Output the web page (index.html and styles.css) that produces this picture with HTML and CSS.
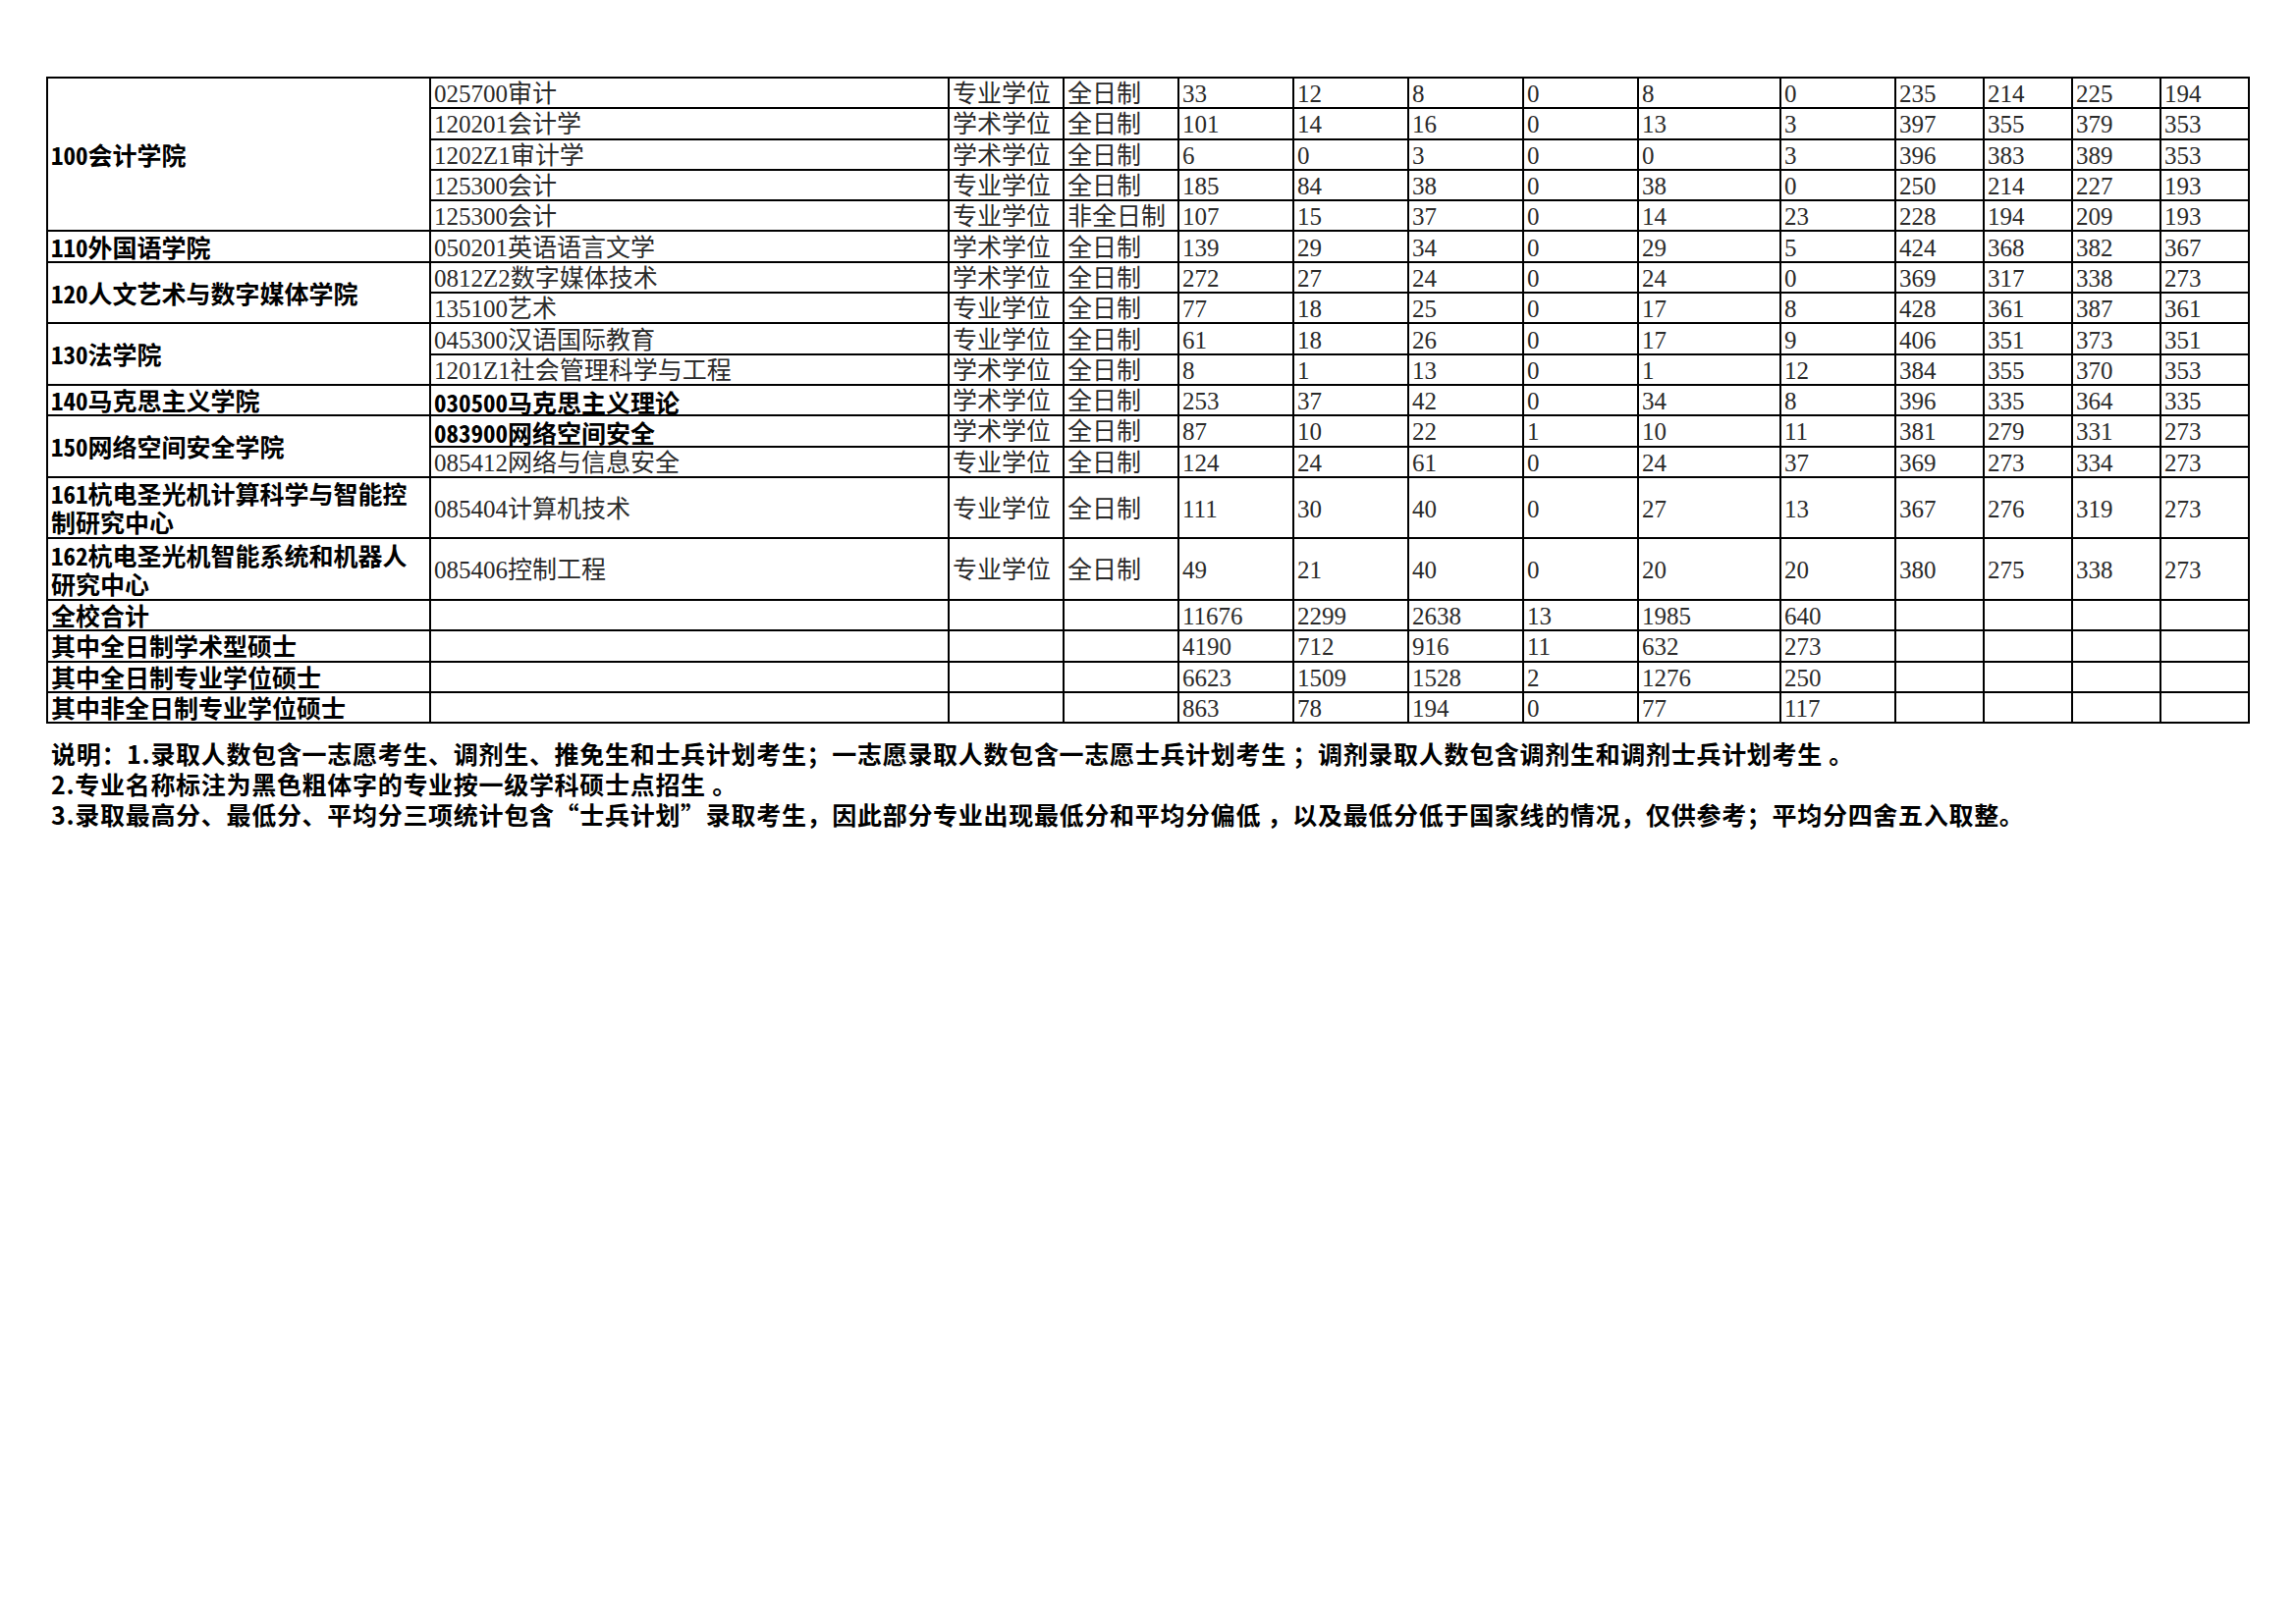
FILE: index.html
```html
<!DOCTYPE html>
<html lang="zh-CN">
<head>
<meta charset="utf-8">
<title>录取情况统计</title>
<link rel="stylesheet" href="styles.css">
</head>
<body>
<div class="page">
<table class="grid">
<colgroup>
<col class="w-college"><col class="w-major"><col class="w-type"><col class="w-mode">
<col class="w-num"><col class="w-num"><col class="w-num"><col class="w-num"><col class="w-wide"><col class="w-num">
<col class="w-score"><col class="w-score"><col class="w-score"><col class="w-score">
</colgroup>
<tbody>
<tr><td class="college" rowspan="5">100会计学院</td><td class="major">025700审计</td><td>专业学位</td><td>全日制</td><td>33</td><td>12</td><td>8</td><td>0</td><td>8</td><td>0</td><td>235</td><td>214</td><td>225</td><td>194</td></tr>
<tr><td class="major">120201会计学</td><td>学术学位</td><td>全日制</td><td>101</td><td>14</td><td>16</td><td>0</td><td>13</td><td>3</td><td>397</td><td>355</td><td>379</td><td>353</td></tr>
<tr><td class="major">1202Z1审计学</td><td>学术学位</td><td>全日制</td><td>6</td><td>0</td><td>3</td><td>0</td><td>0</td><td>3</td><td>396</td><td>383</td><td>389</td><td>353</td></tr>
<tr><td class="major">125300会计</td><td>专业学位</td><td>全日制</td><td>185</td><td>84</td><td>38</td><td>0</td><td>38</td><td>0</td><td>250</td><td>214</td><td>227</td><td>193</td></tr>
<tr><td class="major">125300会计</td><td>专业学位</td><td>非全日制</td><td>107</td><td>15</td><td>37</td><td>0</td><td>14</td><td>23</td><td>228</td><td>194</td><td>209</td><td>193</td></tr>
<tr><td class="college">110外国语学院</td><td class="major">050201英语语言文学</td><td>学术学位</td><td>全日制</td><td>139</td><td>29</td><td>34</td><td>0</td><td>29</td><td>5</td><td>424</td><td>368</td><td>382</td><td>367</td></tr>
<tr><td class="college" rowspan="2">120人文艺术与数字媒体学院</td><td class="major">0812Z2数字媒体技术</td><td>学术学位</td><td>全日制</td><td>272</td><td>27</td><td>24</td><td>0</td><td>24</td><td>0</td><td>369</td><td>317</td><td>338</td><td>273</td></tr>
<tr><td class="major">135100艺术</td><td>专业学位</td><td>全日制</td><td>77</td><td>18</td><td>25</td><td>0</td><td>17</td><td>8</td><td>428</td><td>361</td><td>387</td><td>361</td></tr>
<tr><td class="college" rowspan="2">130法学院</td><td class="major">045300汉语国际教育</td><td>专业学位</td><td>全日制</td><td>61</td><td>18</td><td>26</td><td>0</td><td>17</td><td>9</td><td>406</td><td>351</td><td>373</td><td>351</td></tr>
<tr><td class="major">1201Z1社会管理科学与工程</td><td>学术学位</td><td>全日制</td><td>8</td><td>1</td><td>13</td><td>0</td><td>1</td><td>12</td><td>384</td><td>355</td><td>370</td><td>353</td></tr>
<tr><td class="college">140马克思主义学院</td><td class="major strong">030500马克思主义理论</td><td>学术学位</td><td>全日制</td><td>253</td><td>37</td><td>42</td><td>0</td><td>34</td><td>8</td><td>396</td><td>335</td><td>364</td><td>335</td></tr>
<tr><td class="college" rowspan="2">150网络空间安全学院</td><td class="major strong">083900网络空间安全</td><td>学术学位</td><td>全日制</td><td>87</td><td>10</td><td>22</td><td>1</td><td>10</td><td>11</td><td>381</td><td>279</td><td>331</td><td>273</td></tr>
<tr><td class="major">085412网络与信息安全</td><td>专业学位</td><td>全日制</td><td>124</td><td>24</td><td>61</td><td>0</td><td>24</td><td>37</td><td>369</td><td>273</td><td>334</td><td>273</td></tr>
<tr class="tall"><td class="college">161杭电圣光机计算科学与智能控<br>制研究中心</td><td class="major">085404计算机技术</td><td>专业学位</td><td>全日制</td><td>111</td><td>30</td><td>40</td><td>0</td><td>27</td><td>13</td><td>367</td><td>276</td><td>319</td><td>273</td></tr>
<tr class="tall"><td class="college">162杭电圣光机智能系统和机器人<br>研究中心</td><td class="major">085406控制工程</td><td>专业学位</td><td>全日制</td><td>49</td><td>21</td><td>40</td><td>0</td><td>20</td><td>20</td><td>380</td><td>275</td><td>338</td><td>273</td></tr>
<tr><td class="college">全校合计</td><td></td><td></td><td></td><td>11676</td><td>2299</td><td>2638</td><td>13</td><td>1985</td><td>640</td><td></td><td></td><td></td><td></td></tr>
<tr><td class="college">其中全日制学术型硕士</td><td></td><td></td><td></td><td>4190</td><td>712</td><td>916</td><td>11</td><td>632</td><td>273</td><td></td><td></td><td></td><td></td></tr>
<tr><td class="college">其中全日制专业学位硕士</td><td></td><td></td><td></td><td>6623</td><td>1509</td><td>1528</td><td>2</td><td>1276</td><td>250</td><td></td><td></td><td></td><td></td></tr>
<tr><td class="college">其中非全日制专业学位硕士</td><td></td><td></td><td></td><td>863</td><td>78</td><td>194</td><td>0</td><td>77</td><td>117</td><td></td><td></td><td></td><td></td></tr>
</tbody>
</table>
<div class="notes">
<p>说明：1.录取人数包含一志愿考生、调剂生、推免生和士兵计划考生；一志愿录取人数包含一志愿士兵计划考生 ；调剂录取人数包含调剂生和调剂士兵计划考生 。</p>
<p>2.专业名称标注为黑色粗体字的专业按一级学科硕士点招生 。</p>
<p>3.录取最高分、最低分、平均分三项统计包含“士兵计划”录取考生，因此部分专业出现最低分和平均分偏低 ，以及最低分低于国家线的情况，仅供参考；平均分四舍五入取整。</p>
</div>
</div>
</body>
</html>
```

FILE: styles.css
```css
html, body {
  margin: 0;
  padding: 0;
  background: #ffffff;
}

.page {
  padding: 78px 0 0 47px;
}

.grid {
  border-collapse: collapse;
  table-layout: fixed;
  width: 2244px;
}

.w-college { width: 390px; }
.w-major { width: 528px; }
.w-type { width: 117px; }
.w-mode { width: 117px; }
.w-num { width: 117px; }
.w-wide { width: 145px; }
.w-score { width: 90px; }

.grid tr { height: 31.3px; }
.grid tr.tall { height: 62.6px; }

.grid td {
  border: 2px solid #000;
  padding: 3px 0 0 3px;
  font-family: "Liberation Serif", "Noto Sans CJK SC", serif;
  font-size: 25px;
  line-height: 26px;
  color: #2a2a2a;
  white-space: nowrap;
  vertical-align: middle;
}

.grid td.college {
  font-family: "Noto Sans CJK SC", sans-serif;
  font-weight: 700;
  font-feature-settings: "hwid";
  color: #000;
  line-height: 29px;
  padding-top: 0;
}

.grid td.major.strong {
  font-family: "Noto Sans CJK SC", sans-serif;
  font-weight: 700;
  font-feature-settings: "hwid";
  color: #000;
}

.notes {
  margin: 15px 0 0 5px;
  font-family: "Noto Sans CJK SC", sans-serif;
  font-weight: 700;
  font-size: 25px;
  line-height: 31px;
  letter-spacing: 0.7px;
  color: #000;
}

.notes p {
  margin: 0;
  white-space: nowrap;
}
```
